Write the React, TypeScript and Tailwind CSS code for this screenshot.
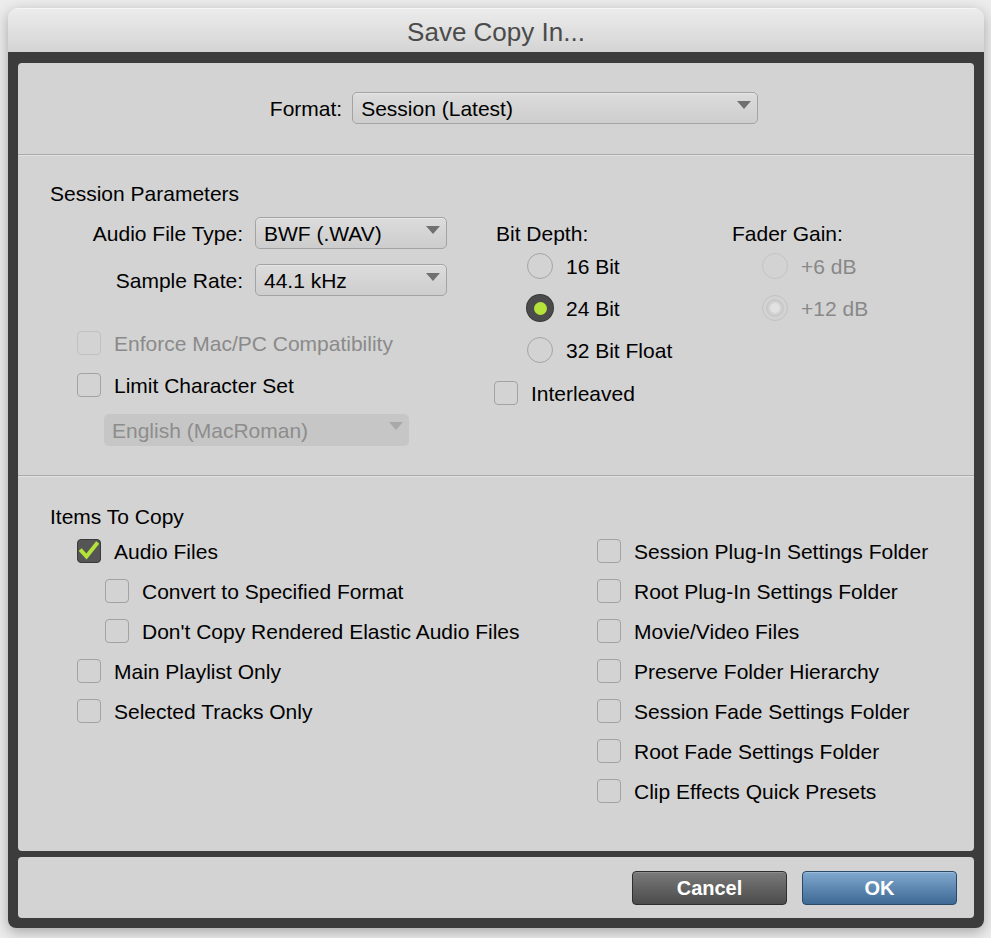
import React from 'react';

const font = { fontFamily: '"Liberation Sans", Arial, Helvetica, sans-serif' };

const Triangle = ({ muted = false }: { muted?: boolean }) => (
  <svg width="14" height="8" viewBox="0 0 14 8" className="absolute right-[6px] top-[8px]">
    <path d="M0 0 L14 0 L7 8 Z" fill={muted ? '#a9a9a9' : '#707070'} />
  </svg>
);

const Dropdown = ({ value, className, disabled = false }: { value: string; className: string; disabled?: boolean }) => (
  <div
    className={
      'relative flex h-[32px] items-center rounded-[5px] pl-[8px] ' +
      (disabled
        ? 'bg-[#c6c6c6] text-[#8d8d8d]'
        : 'border border-[#a3a3a3] bg-gradient-to-b from-[#dcdcdc] to-[#cdcdcd] text-black shadow-[inset_0_1px_0_#e6e6e6]') +
      ' ' +
      className
    }
  >
    {value}
    <Triangle muted={disabled} />
  </div>
);

const Checkbox = ({ checked = false, disabled = false }: { checked?: boolean; disabled?: boolean }) =>
  checked ? (
    <div className="flex h-[24px] w-[24px] shrink-0 items-center justify-center rounded-[4px] border border-[#3a3a3a] bg-[#555555]">
      <svg width="20" height="20" viewBox="0 0 20 20">
        <path d="M2.5 10 L7.5 15.5 L17.5 3" stroke="#b3e339" strokeWidth="4" fill="none" strokeLinecap="square" />
      </svg>
    </div>
  ) : (
    <div
      className={
        'h-[24px] w-[24px] shrink-0 rounded-[4px] border-[1.5px] ' +
        (disabled ? 'border-[#c0c0c0]' : 'border-[#a2a2a2]')
      }
    />
  );

const Radio = ({ selected = false, disabled = false }: { selected?: boolean; disabled?: boolean }) => {
  if (selected && !disabled)
    return (
      <div className="flex h-[26px] w-[26px] shrink-0 items-center justify-center rounded-full bg-[#4b4b4b] shadow-[0_0_0_1px_#3a3a3a]">
        <div className="h-[13px] w-[13px] rounded-full bg-[#b6e33a]" />
      </div>
    );
  if (selected && disabled)
    return (
      <div className="flex h-[26px] w-[26px] shrink-0 items-center justify-center rounded-full border-[1.5px] border-[#c2c2c2]">
        <div className="flex h-[18px] w-[18px] items-center justify-center rounded-full border-[2px] border-[#c8c8c8]">
          <div className="h-[10px] w-[10px] rounded-full bg-[#e2e2e2]" />
        </div>
      </div>
    );
  return (
    <div
      className={
        'h-[26px] w-[26px] shrink-0 rounded-full border-[1.5px] ' + (disabled ? 'border-[#c4c4c4]' : 'border-[#a5a5a5]')
      }
    />
  );
};

const CheckRow = ({
  label,
  checked,
  disabled,
  className = '',
}: {
  label: string;
  checked?: boolean;
  disabled?: boolean;
  className?: string;
}) => (
  <div className={'flex h-[40px] items-center gap-[13px] ' + className}>
    <Checkbox checked={checked} disabled={disabled} />
    <span className={disabled ? 'text-[#8a8a8a]' : 'text-black'}>{label}</span>
  </div>
);

const RadioRow = ({ label, selected, disabled }: { label: string; selected?: boolean; disabled?: boolean }) => (
  <div className="flex h-[42px] items-center gap-[13px]">
    <Radio selected={selected} disabled={disabled} />
    <span className={disabled ? 'text-[#888888]' : 'text-black'}>{label}</span>
  </div>
);

const Divider = () => (
  <div>
    <div className="h-[1px] bg-[#a9a9a9]" />
    <div className="h-[1px] bg-[#e1e1e1]" />
  </div>
);

export default function App() {
  return (
    <div className="h-[938px] w-[991px] bg-[#ececec] pl-[8px] pt-[8px] text-[21px] leading-none" style={font}>
      <div className="w-[976px] overflow-hidden rounded-t-[10px] rounded-b-[8px] shadow-[0_4px_14px_rgba(0,0,0,0.3)]">
        {/* title bar */}
        <div className="flex h-[44px] items-center justify-center border-t border-[#f6f6f6] bg-gradient-to-b from-[#ececec] to-[#d4d4d4] pt-[2px] text-[26px] text-[#4b4b4b]">
          Save Copy In...
        </div>

        <div className="flex flex-col gap-[6px] bg-[#3c3c3c] px-[10px] pb-[10px] pt-[11px]">
          <div className="flex h-[788px] flex-col rounded-[4px] bg-[#d3d3d3]">
            {/* format */}
            <div className="flex h-[91px] items-center justify-center gap-[10px] pb-[1px] pl-[36px]">
              <span>Format:</span>
              <Dropdown value="Session (Latest)" className="w-[406px]" />
            </div>
            <Divider />

            {/* session parameters */}
            <div className="flex h-[319px] pl-[32px]">
              <div className="w-[444px] pt-[25px]">
                <div className="flex h-[24px] items-center">Session Parameters</div>
                <div className="mt-[12px] flex items-center">
                  <span className="w-[193px] text-right">Audio File Type:</span>
                  <Dropdown value="BWF (.WAV)" className="ml-[12px] w-[192px]" />
                </div>
                <div className="mt-[15px] flex items-center">
                  <span className="w-[193px] text-right">Sample Rate:</span>
                  <Dropdown value="44.1 kHz" className="ml-[12px] w-[192px]" />
                </div>
                <CheckRow label="Enforce Mac/PC Compatibility" disabled className="ml-[27px] mt-[27px]" />
                <CheckRow label="Limit Character Set" className="ml-[27px] mt-[2px]" />
                <Dropdown value="English (MacRoman)" disabled className="ml-[54px] mt-[9px] w-[305px]" />
              </div>

              <div className="w-[238px] pt-[65px]">
                <div className="ml-[2px] flex h-[24px] items-center">Bit Depth:</div>
                <div className="ml-[33px]">
                  <RadioRow label="16 Bit" />
                  <RadioRow label="24 Bit" selected />
                  <RadioRow label="32 Bit Float" />
                </div>
                <CheckRow label="Interleaved" className="mt-[2px]" />
              </div>

              <div className="pt-[65px]">
                <div className="flex h-[24px] items-center">Fader Gain:</div>
                <div className="ml-[30px]">
                  <RadioRow label="+6 dB" disabled />
                  <RadioRow label="+12 dB" selected disabled />
                </div>
              </div>
            </div>
            <Divider />

            {/* items to copy */}
            <div className="pl-[32px] pt-[27px]">
              <div className="flex h-[24px] items-center">Items To Copy</div>
              <div className="mt-[3px] flex">
                <div className="ml-[27px] w-[520px]">
                  <CheckRow label="Audio Files" checked />
                  <CheckRow label="Convert to Specified Format" className="ml-[28px]" />
                  <CheckRow label="Don't Copy Rendered Elastic Audio Files" className="ml-[28px]" />
                  <CheckRow label="Main Playlist Only" />
                  <CheckRow label="Selected Tracks Only" />
                </div>
                <div>
                  <CheckRow label="Session Plug-In Settings Folder" />
                  <CheckRow label="Root Plug-In Settings Folder" />
                  <CheckRow label="Movie/Video Files" />
                  <CheckRow label="Preserve Folder Hierarchy" />
                  <CheckRow label="Session Fade Settings Folder" />
                  <CheckRow label="Root Fade Settings Folder" />
                  <CheckRow label="Clip Effects Quick Presets" />
                </div>
              </div>
            </div>
          </div>

          {/* buttons */}
          <div className="flex h-[61px] items-start justify-end gap-[15px] rounded-[4px] bg-[#d3d3d3] pr-[17px] pt-[14px]">
            <button className="h-[34px] w-[155px] rounded-[4px] border border-[#2e2e2e] bg-gradient-to-b from-[#7a7a7a] to-[#4c4c4c] text-[20px] font-bold text-white shadow-[inset_0_1px_0_#8e8e8e]">
              Cancel
            </button>
            <button className="h-[34px] w-[155px] rounded-[4px] border border-[#2b4a69] bg-gradient-to-b from-[#82a9cf] to-[#3d6994] text-[20px] font-bold text-white shadow-[inset_0_1px_0_#9bbbdb]">
              OK
            </button>
          </div>
        </div>
      </div>
    </div>
  );
}
